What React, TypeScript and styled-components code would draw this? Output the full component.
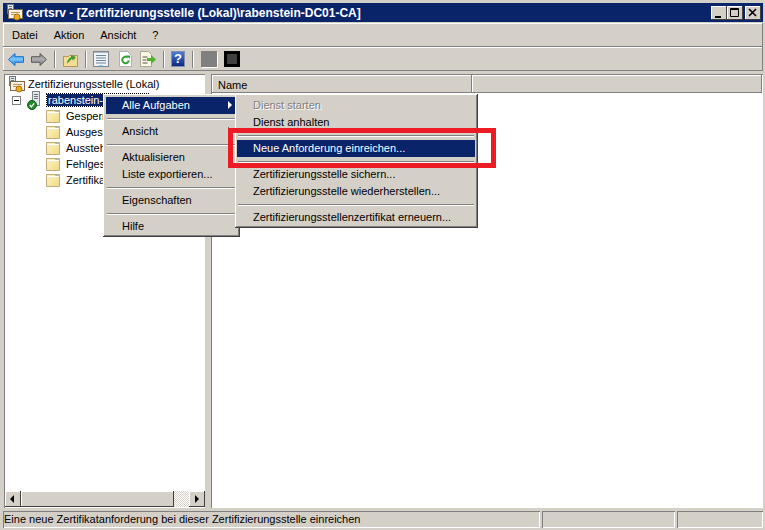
import React from 'react';
import styled, { createGlobalStyle } from 'styled-components';

const GlobalStyle = createGlobalStyle`
  html, body {
    margin: 0;
    padding: 0;
    background: #d4d0c8;
  }
  body {
    font-family: "Liberation Sans", Arial, sans-serif;
    font-size: 11px;
    color: #000;
  }
`;

const treeItems = ['Gesperr', 'Ausgest', 'Ausstehe', 'Fehlges', 'Zertifika'];

const CertIcon = () => (
  <IconBox viewBox="0 0 17 17" width="17" height="17">
    <rect x="1.500" y=".5" width="6" height="9" fill="#dfe3e6" stroke="#6c7478"/>
    <path d="M3 2.500h3M3 4.500h3" stroke="#6c7478"/>
    <rect x="2.500" y="5.500" width="14" height="9" fill="#f8f3e2" stroke="#7a6a4c"/>
    <path d="M5 8.500h9M5 10.500h5" stroke="#c98f5a"/>
    <circle cx="11" cy="13" r="3" fill="#efaa1e" stroke="#a9720f"/>
  </IconBox>
);

const ServerIcon = () => (
  <IconBox viewBox="0 0 14 19" width="14" height="19">
    <rect x="5.500" y=".5" width="7" height="14" fill="#e4e7ea" stroke="#7c848c"/>
    <path d="M7 3.500h4M7 5.500h4M7 7.500h4" stroke="#6c747c"/>
    <circle cx="5" cy="14" r="4.500" fill="#1f8a2c" stroke="#0f5c18"/>
    <path d="M2.800 14l1.600 2 2.800-3.600" fill="none" stroke="#fff" strokeWidth="1.300"/>
  </IconBox>
);

const FolderIcon = () => (
  <IconBox viewBox="0 0 14 13" width="14" height="13">
    <defs>
      <linearGradient id="folderFill" x1="0" y1="0" x2="1" y2="1">
        <stop offset="0" stopColor="#fdf3c2"/>
        <stop offset="1" stopColor="#f3d98a"/>
      </linearGradient>
    </defs>
    <path d="M.5 12.500V.5h13v12z" fill="url(#folderFill)" stroke="#bcae78"/>
    <path d="M1 2.500h12" stroke="#fff"/>
    <path d="M9 1h4v1H9z" fill="#a4c0dc"/>
  </IconBox>
);

const NavArrow = ({ id, light, dark, edge, left }: { id: string; light: string; dark: string; edge: string; left?: boolean }) => (
  <IconBox width="16" height="13" viewBox="0 0 16 13">
    <defs>
      <linearGradient id={id} x1="0" y1="0" x2="0" y2="1">
        <stop offset="0" stopColor={dark}/>
        <stop offset=".45" stopColor={light}/>
        <stop offset="1" stopColor={dark}/>
      </linearGradient>
    </defs>
    <path
      d={left ? 'M.5 6.500L7 .5v3.200h8.500v5.600H7v3.200z' : 'M15.500 6.500L9 .5v3.200H.5v5.600H9v3.200z'}
      fill={`url(#${id})`}
      stroke={edge}
    />
  </IconBox>
);

const App: React.FC = () => (
  <>
    <GlobalStyle/>
    <Win>
      <TitleBar>
        <CertIcon/>
        <TitleText>certsrv - [Zertifizierungsstelle (Lokal)\rabenstein-DC01-CA]</TitleText>
        <CaptionButtons>
          <CaptionButton>
            <svg width="10" height="10" viewBox="0 0 10 10"><path d="M1 8h6v2H1z"/></svg>
          </CaptionButton>
          <CaptionButton>
            <svg width="10" height="10" viewBox="0 0 10 10"><path d="M.5 .5h8v8h-8zM0 1.500h9" fill="none" stroke="#000"/></svg>
          </CaptionButton>
          <CaptionButton $gap>
            <svg width="10" height="10" viewBox="0 0 10 10"><path d="M1 1l7 7M8 1L1 8" stroke="#000" strokeWidth="1.600"/></svg>
          </CaptionButton>
        </CaptionButtons>
      </TitleBar>

      <MenuBar>
        <span>Datei</span>
        <span>Aktion</span>
        <span>Ansicht</span>
        <span>?</span>
      </MenuBar>

      <ToolBar>
        <NavArrow id="backFill" light="#7cc8ff" dark="#1f84e4" edge="#1c70c4" left/>
        <NavArrow id="forwardFill" light="#b0b0b0" dark="#787878" edge="#5c5c5c"/>
        <ToolSep $after={1}/>
        <IconBox width="15" height="15" viewBox="0 0 15 15">
          <path d="M.5 14.500v-10h5l1-1h8v11z" fill="#f4dc94" stroke="#b09858"/>
          <path d="M4 12c0-4 2-6 4-7V3l5 2-3 3.500-1-1.500c-2 1-3 3-5 5z" fill="#3fa02f"/>
        </IconBox>
        <ToolSep/>
        <IconBox width="16" height="16" viewBox="0 0 16 16">
          <rect x=".5" y=".5" width="15" height="15" fill="#f0f3f6" stroke="#7c8894"/>
          <path d="M1 1.500h14" stroke="#aeb8c4"/>
          <path d="M3 4.500h10M3 7h10M3 9.500h10M3 12h10" stroke="#6c849c"/>
          <path d="M6 15h4" stroke="#38a8e0"/>
        </IconBox>
        <RefreshBox>
          <IconBox width="13" height="16" viewBox="0 0 13 16">
            <path d="M.5.5h8l4 4v11H.5z" fill="#fff" stroke="#b0b0b0"/>
            <path d="M9.800 9.500a3.300 3.300 0 1 1-1-3" fill="none" stroke="#30a030" strokeWidth="2"/>
            <path d="M7.500 4.500h3.500v3.500z" fill="#30a030"/>
          </IconBox>
        </RefreshBox>
        <IconBox width="16" height="16" viewBox="0 0 16 16">
          <path d="M.5.5h8l3 3v12h-11z" fill="#fdf8e0" stroke="#a8a898"/>
          <path d="M2.500 6h5M2.500 9h4M2.500 12h5" stroke="#555"/>
          <path d="M7 7h4V4l5 4.500-5 4.500v-3H7z" fill="#50b030"/>
        </IconBox>
        <ToolSep/>
        <HelpIcon>?</HelpIcon>
        <ToolSep $after={1}/>
        <GraySquare/>
        <BlackSquare/>
      </ToolBar>

      <Content>
        <TreePane>
          <TreeBody>
            <TreeRow>
              <CertIcon/>
              <span>Zertifizierungsstelle (Lokal)</span>
            </TreeRow>
            <TreeRow $indent={7}>
              <Expander/>
              <ServerIcon/>
              <SelectedNode>rabenstein-</SelectedNode>
            </TreeRow>
            {treeItems.map(item => (
              <TreeRow key={item} $indent={41}>
                <FolderIcon/>
                <FolderText>{item}</FolderText>
              </TreeRow>
            ))}
          </TreeBody>
          <HScroll>
            <ScrollButton $dir="left"/>
            <ScrollThumb/>
            <ScrollRest/>
            <ScrollButton $dir="right"/>
          </HScroll>
        </TreePane>
        <ListPane>
          <ListHeader>
            <HeaderCell $w={260}>Name</HeaderCell>
            <HeaderCell $grow/>
          </ListHeader>
        </ListPane>
      </Content>

      <StatusBar>
        <StatusCell $grow>Eine neue Zertifikatanforderung bei dieser Zertifizierungsstelle einreichen</StatusCell>
        <StatusCell $w={131}/>
        <StatusCell $w={84}/>
      </StatusBar>

      <ContextMenu>
        <MenuItem $active>Alle Aufgaben<MenuArrow $white/></MenuItem>
        <MenuDivider/>
        <MenuItem>Ansicht<MenuArrow/></MenuItem>
        <MenuDivider/>
        <MenuItem>Aktualisieren</MenuItem>
        <MenuItem>Liste exportieren...</MenuItem>
        <MenuDivider/>
        <MenuItem>Eigenschaften</MenuItem>
        <MenuDivider/>
        <MenuItem>Hilfe</MenuItem>
      </ContextMenu>

      <SubMenu>
        <SubItem $disabled>Dienst starten</SubItem>
        <SubItem>Dienst anhalten</SubItem>
        <MenuDivider/>
        <SubItem $active>Neue Anforderung einreichen...</SubItem>
        <MenuDivider/>
        <SubItem>Zertifizierungsstelle sichern...</SubItem>
        <SubItem>Zertifizierungsstelle wiederherstellen...</SubItem>
        <MenuDivider/>
        <SubItem>Zertifizierungsstellenzertifikat erneuern...</SubItem>
      </SubMenu>

      <RedMark/>
    </Win>
  </>
);

export default App;

const IconBox = styled.svg`
    flex: none;
    display: block;
  `,
  Win = styled.div`
    position: relative;
    width: 765px;
    height: 530px;
    box-sizing: border-box;
    padding: 3px 2px 2px 3px;
    display: flex;
    flex-direction: column;
    overflow: hidden;
    background: #d4d0c8;
  `,
  TitleBar = styled.div`
    height: 19px;
    flex: none;
    display: flex;
    align-items: center;
    gap: 3px;
    padding: 0 2px 0 3px;
    background: #0a246a;
  `,
  TitleText = styled.div`
    flex: 1;
    color: #fff;
    font-weight: bold;
    font-size: 12px;
    white-space: nowrap;
  `,
  CaptionButtons = styled.div`
    display: flex;
  `,
  CaptionButton = styled.div<{ $gap?: boolean }>`
    width: 16px;
    height: 14px;
    margin-left: ${p => (p.$gap ? '2px' : '0')};
    display: flex;
    align-items: center;
    justify-content: center;
    background: #d4d0c8;
    box-shadow: inset -1px -1px #404040, inset 1px 1px #fff;
  `,
  MenuBar = styled.div`
    height: 24px;
    flex: none;
    margin-top: 1px;
    box-sizing: border-box;
    display: flex;
    align-items: center;
    gap: 16px;
    padding: 0 9px;
    box-shadow: inset -1px -1px #808080, inset 1px 1px #fff;
  `,
  ToolBar = styled.div`
    height: 24px;
    flex: none;
    display: flex;
    align-items: center;
    gap: 7px;
    padding: 0 5px;
    box-shadow: inset -1px -1px #808080, inset 1px 1px #fff;
  `,
  ToolSep = styled.div<{ $after?: number }>`
    width: 1px;
    height: 17px;
    margin-right: ${p => p.$after ?? 0}px;
    background: #808080;
    box-shadow: 1px 0 #fff;
  `,
  RefreshBox = styled.div`
    margin-left: 3px;
    margin-right: 1px;
  `,
  HelpIcon = styled.div`
    width: 12px;
    height: 14px;
    background: linear-gradient(#4a7cd8, #102880);
    border: 1px solid #8090a8;
    color: #fff;
    font: bold 13px/14px "Liberation Sans", sans-serif;
    text-align: center;
  `,
  GraySquare = styled.div`
    width: 16px;
    height: 16px;
    background: #808080;
    box-shadow: 1px 1px #fff;
  `,
  BlackSquare = styled.div`
    width: 10px;
    height: 10px;
    background: #404040;
    border: 3px solid #000;
  `,
  Content = styled.div`
    flex: 1;
    min-height: 0;
    margin-top: 3px;
    display: flex;
    gap: 6px;
    padding-left: 1px;
  `,
  TreePane = styled.div`
    width: 201px;
    display: flex;
    flex-direction: column;
    background: #fff;
    box-shadow: inset 1px 1px #808080, inset -1px -1px #fff;
    padding: 2px 0 1px 1px;
    box-sizing: border-box;
  `,
  TreeBody = styled.div`
    flex: 1;
    overflow: hidden;
  `,
  TreeRow = styled.div<{ $indent?: number }>`
    height: 16px;
    display: flex;
    align-items: center;
    gap: 3px;
    padding-left: ${p => p.$indent ?? 3}px;
    white-space: nowrap;
  `,
  FolderText = styled.span`
    margin-left: 3px;
  `,
  Expander = styled.div`
    flex: none;
    width: 7px;
    height: 7px;
    margin-right: 3px;
    border: 1px solid #808080;
    background: linear-gradient(#000, #000) center / 5px 1px no-repeat;
  `,
  SelectedNode = styled.span`
    width: 100px;
    flex: none;
    margin-left: 3px;
    padding-left: 1px;
    background: #0a246a;
    color: #fff;
    outline: 1px dotted #000;
  `,
  HScroll = styled.div`
    height: 16px;
    flex: none;
    display: flex;
  `,
  ScrollButton = styled.div<{ $dir: 'left' | 'right' }>`
    width: 16px;
    height: 16px;
    flex: none;
    position: relative;
    background: #d4d0c8;
    box-shadow: inset -1px -1px #404040, inset 1px 1px #fff;
    &::after {
      content: '';
      position: absolute;
      top: 4px;
      left: ${p => (p.$dir === 'left' ? '5px' : '6px')};
      border-style: solid;
      border-color: transparent;
      border-width: ${p => (p.$dir === 'left' ? '4px 4px 4px 0' : '4px 0 4px 4px')};
      border-${p => (p.$dir === 'left' ? 'right' : 'left')}-color: #000;
    }
  `,
  ScrollThumb = styled.div`
    width: 153px;
    background: #d4d0c8;
    box-shadow: inset -1px -1px #404040, inset 1px 1px #fff;
  `,
  ScrollRest = styled.div`
    flex: 1;
    background: repeating-conic-gradient(#d4d0c8 0 25%, #fff 0 50%) 0 0 / 2px 2px;
  `,
  ListPane = styled.div`
    flex: 1;
    background: #fff;
    box-shadow: inset 1px 1px #808080, inset -1px -1px #fff;
    padding: 1px 1px 0 1px;
  `,
  ListHeader = styled.div`
    height: 18px;
    display: flex;
  `,
  HeaderCell = styled.div<{ $w?: number; $grow?: boolean }>`
    width: ${p => (p.$w ? `${p.$w}px` : 'auto')};
    flex: ${p => (p.$grow ? 1 : 'none')};
    box-sizing: border-box;
    padding: 4px 0 0 6px;
    background: #d4d0c8;
    box-shadow: inset -1px -1px #808080, inset 1px 1px #fff;
  `,
  StatusBar = styled.div`
    height: 17px;
    flex: none;
    margin-top: 3px;
    display: flex;
    gap: 2px;
  `,
  StatusCell = styled.div<{ $w?: number; $grow?: boolean }>`
    width: ${p => (p.$w ? `${p.$w}px` : 'auto')};
    flex: ${p => (p.$grow ? 1 : 'none')};
    padding: 2px 1px;
    white-space: nowrap;
    box-shadow: inset 1px 1px #808080, inset -1px -1px #fff;
  `,
  ContextMenu = styled.div`
    position: absolute;
    left: 103px;
    top: 94px;
    width: 137px;
    height: 143px;
    box-sizing: border-box;
    padding: 3px;
    background: #d4d0c8;
    box-shadow: inset -1px -1px #404040, inset 1px 1px #fff, inset -2px -2px #808080;
  `,
  MenuItem = styled.div<{ $active?: boolean }>`
    height: 17px;
    position: relative;
    line-height: 16px;
    padding-left: 16px;
    white-space: nowrap;
    color: ${p => (p.$active ? '#fff' : '#000')};
    background: ${p => (p.$active ? '#0a246a' : 'transparent')};
  `,
  MenuArrow = styled.span<{ $white?: boolean }>`
    position: absolute;
    right: 5px;
    top: 4px;
    border-style: solid;
    border-width: 4px 0 4px 4px;
    border-color: transparent transparent transparent ${p => (p.$white ? '#fff' : '#000')};
  `,
  MenuDivider = styled.div`
    height: 1px;
    margin: 4px 1px 4px 1px;
    background: #808080;
    box-shadow: 0 1px #fff;
  `,
  SubMenu = styled.div`
    position: absolute;
    left: 235px;
    top: 94px;
    width: 243px;
    height: 134px;
    box-sizing: border-box;
    padding: 3px 3px 2px 2px;
    background: #d4d0c8;
    box-shadow: inset -1px -1px #404040, inset 1px 1px #fff, inset -2px -2px #808080;
  `,
  SubItem = styled.div<{ $active?: boolean; $disabled?: boolean }>`
    height: 17px;
    line-height: 16px;
    padding-left: 16px;
    white-space: nowrap;
    color: ${p => (p.$active ? '#fff' : p.$disabled ? '#808080' : '#000')};
    text-shadow: ${p => (p.$disabled ? '1px 1px #fff' : 'none')};
    background: ${p => (p.$active ? '#0a246a' : 'transparent')};
  `,
  RedMark = styled.div`
    position: absolute;
    left: 228px;
    top: 128px;
    width: 268px;
    height: 40px;
    box-sizing: border-box;
    border: 5px solid #ed1c24;
    pointer-events: none;
  `;
